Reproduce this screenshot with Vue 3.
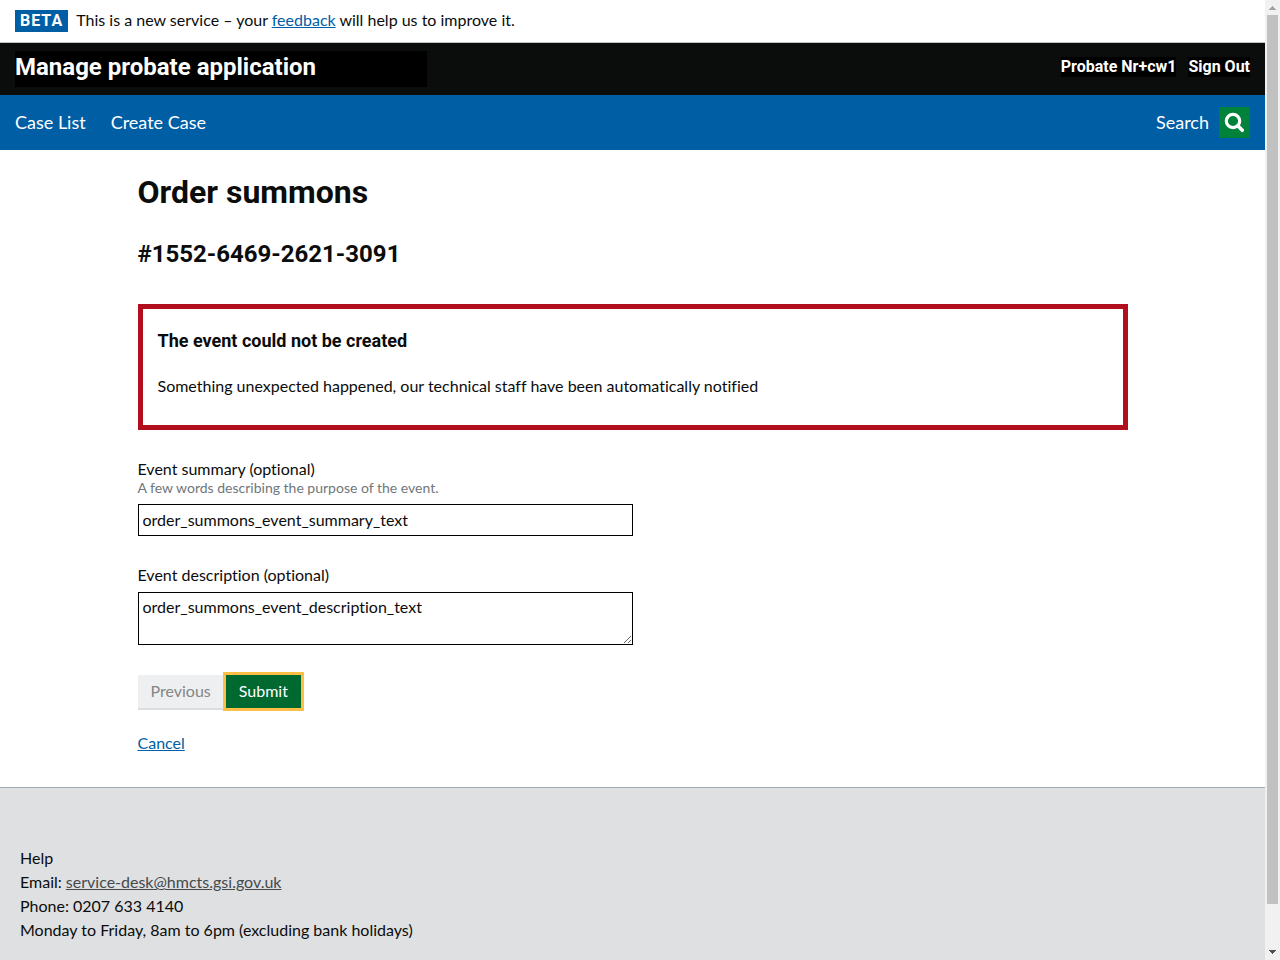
<script setup>
import { ref } from 'vue'

const summary = ref('order_summons_event_summary_text')
const description = ref('order_summons_event_description_text')
</script>

<template>
  <div class="window">
    <div class="page">
      <div class="phase">
        <strong class="tag">BETA</strong>
        <span class="message">This is a new service – your <a href="#feedback">feedback</a> will help us to improve it.</span>
      </div>

      <header class="top">
        <div class="title">Manage probate application</div>
        <div class="account">
          <span>Probate Nr+cw1</span>
          <a href="#signout">Sign Out</a>
        </div>
      </header>

      <nav class="nav">
        <a href="#cases"><span class="nav-text">Case List</span></a>
        <a href="#create"><span class="nav-text">Create Case</span></a>
        <a href="#search" class="search">
          <span class="nav-text">Search</span>
          <span class="search-icon">
            <svg viewBox="0 0 31 31" width="31" height="31" aria-hidden="true">
              <circle cx="14" cy="14" r="6.7" fill="none" stroke="#fff" stroke-width="3.2" />
              <path d="M18.8 18.8L23.3 23.3" stroke="#fff" stroke-width="3.6" stroke-linecap="round" />
            </svg>
          </span>
        </a>
      </nav>

      <main class="content">
        <h1>Order summons</h1>
        <h2>#1552-6469-2621-3091</h2>

        <section class="error" role="alert">
          <h3>The event could not be created</h3>
          <p>Something unexpected happened, our technical staff have been automatically notified</p>
        </section>

        <form @submit.prevent>
          <div class="group">
            <label for="summary">Event summary (optional)</label>
            <span id="summary-hint" class="hint">A few words describing the purpose of the event.</span>
            <input id="summary" v-model="summary" type="text" aria-describedby="summary-hint" />
          </div>
          <div class="group">
            <label for="description">Event description (optional)</label>
            <textarea id="description" v-model="description"></textarea>
          </div>
          <div class="buttons">
            <button type="button" class="previous" disabled>Previous</button>
            <button type="submit" class="submit">Submit</button>
          </div>
          <p class="cancel"><a href="#cancel">Cancel</a></p>
        </form>
      </main>

      <footer class="footer">
        <p>Help</p>
        <p>Email: <a href="mailto:service-desk@hmcts.gsi.gov.uk">service-desk@hmcts.gsi.gov.uk</a></p>
        <p>Phone: 0207 633 4140</p>
        <p>Monday to Friday, 8am to 6pm (excluding bank holidays)</p>
      </footer>
    </div>

    <div class="scrollbar" aria-hidden="true">
      <svg viewBox="0 0 15 15" width="15" height="15"><path d="M4 10h7v-1h-1v-1h-1v-1h-1v-1h-1v1h-1v1h-1v1h-1z" fill="#a3a3a3" /></svg>
      <div class="track"><div class="thumb"></div></div>
      <svg viewBox="0 0 15 15" width="15" height="15"><path d="M4 5h7v1h-1v1h-1v1h-1v1h-1v-1h-1v-1h-1v-1h-1z" fill="#505050" /></svg>
    </div>
  </div>
</template>

<style>
body {
  margin: 0;
}
</style>

<style scoped>
.window {
  display: flex;
  height: 100vh;
  overflow: hidden;
  background: #fff;
  color: #0b0c0c;
  font-family: Lato, Roboto, sans-serif;
  font-size: 16px;
  line-height: 20px;
  font-variant-ligatures: none;
}
.window * {
  box-sizing: border-box;
}
.page {
  flex: 1;
  min-width: 0;
  display: flex;
  flex-direction: column;
  overflow: hidden;
}
a {
  color: #005ea5;
}
h1, h2, h3, p {
  margin: 0;
}
h1, h2, h3, .tag, .top {
  font-family: Roboto, "Noto Sans", sans-serif;
}
.phase {
  display: flex;
  align-items: center;
  gap: 8px;
  padding: 10px 15px;
  border-bottom: 1px solid #bfc1c3;
}
.message, .nav-text {
  padding-bottom: 2px;
}
.tag {
  padding: 1px 5px;
  background: #005ea5;
  color: #fff;
  letter-spacing: 1px;
}
.top {
  display: flex;
  justify-content: space-between;
  padding: 8px 15px;
  background: #0b0c0c;
  color: #fff;
  font-weight: 700;
}
.title {
  flex: 0 1 33.333%;
  padding-bottom: 4px;
  background: #000;
  font-size: 24px;
  line-height: 32px;
}
.account {
  display: flex;
  align-items: flex-start;
  gap: 12px;
  padding-top: 6px;
}
.account > * {
  background: #000;
  color: #fff;
  text-decoration: none;
}
.nav {
  display: flex;
  align-items: center;
  gap: 25px;
  padding: 12px 15px;
  background: #005ea5;
  font-size: 18px;
}
.nav a {
  display: flex;
  align-items: center;
  color: #fff;
  text-decoration: none;
}
.nav .search {
  gap: 10px;
  margin-left: auto;
}
.search-icon {
  display: flex;
  background: #00823b;
}
.content {
  width: 990px;
  max-width: calc(100% - 30px);
  margin: 0 auto;
  padding: 22px 0 34px;
}
h1 {
  font-size: 32px;
  line-height: 40px;
}
h2 {
  margin-top: 26px;
  font-size: 24px;
  line-height: 32px;
}
.error {
  margin: 34px 0 29px;
  padding: 20px 15px 29px;
  border: 5px solid #b10e1e;
}
.error h3 {
  font-size: 18px;
  line-height: 24px;
}
.error p {
  margin-top: 23px;
}
.group {
  width: 50%;
  margin-bottom: 29px;
}
label, .hint {
  display: block;
}
.hint {
  color: #6f777b;
  font-size: 14px;
  line-height: 18px;
}
input, textarea {
  display: block;
  width: 100%;
  margin: 7px 0 0;
  padding: 4px 4px 6px;
  border: 1px solid #000;
  border-radius: 0;
  background: #fff;
  color: #0b0c0c;
  font: inherit;
}
input {
  height: 32px;
}
textarea {
  height: 53px;
}
.buttons {
  display: flex;
  gap: 2px;
  padding-top: 1px;
}
button {
  margin: 0;
  padding: 6px 13px 7px;
  border: 0;
  border-radius: 0;
  font: inherit;
}
.previous {
  background: #eeeff0;
  color: #858688;
  box-shadow: 0 2px 0 #dcdddf;
}
.submit {
  background: #00692f;
  color: #fff;
  outline: 3px solid #ffbf47;
}
.cancel {
  margin-top: 25px;
}
.footer {
  flex: 1 0 auto;
  padding: 58px 20px 18px;
  border-top: 1px solid #a1acb2;
  background: #dee0e2;
  line-height: 24px;
}
.footer a {
  color: #454a4c;
}
.scrollbar {
  display: flex;
  flex-direction: column;
  width: 15px;
  background: #f1f1f1;
}
.track {
  flex: 1;
  padding: 0 2px;
}
.thumb {
  height: 95.6%;
  background: #c1c1c1;
}
</style>
